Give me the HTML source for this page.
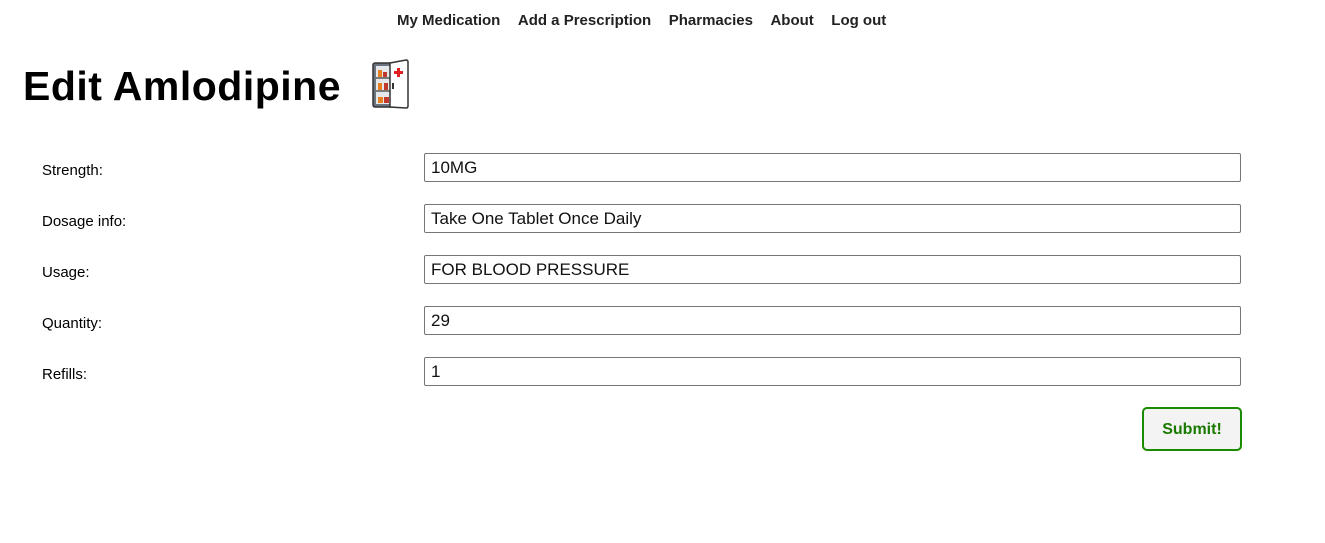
<!DOCTYPE html>
<html><head><style>
body{margin:0;background:#fff;font-family:"Liberation Sans","DejaVu Sans",sans-serif;width:1325px;height:543px;overflow:hidden;position:relative}
nav{position:absolute;top:12px;left:397px;font-size:15px;font-weight:bold;color:#222;white-space:nowrap}
nav span{margin-right:17.5px}
h1{position:absolute;left:23px;top:63px;margin:0;font-size:41px;font-weight:bold;letter-spacing:0.5px}
.lbl{position:absolute;left:42px;font-size:15px;color:#000}
.inp{position:absolute;left:424px;border:1px solid #767676;border-radius:2px;font-size:17px;line-height:27px;padding-left:6px;box-sizing:border-box;width:817px;height:29px;color:#111}
.btn{position:absolute;left:1142px;top:407px;width:100px;height:44px;box-sizing:border-box;border:2px solid #1a8a00;border-radius:5px;background:#f3f3f3;color:#1a7a00;font-weight:bold;font-size:16px;text-align:center;line-height:42px}
</style></head><body>
<nav><span>My Medication</span><span>Add a Prescription</span><span>Pharmacies</span><span>About</span><span>Log out</span></nav>
<h1>Edit Amlodipine</h1>
<svg style="position:absolute;left:370px;top:59px" width="42" height="52" viewBox="0 0 42 52">
<rect x="3" y="4" width="22" height="44" rx="2" fill="#6b7280" stroke="#333" stroke-width="1.5"/>
<rect x="6" y="7" width="16" height="38" fill="#e5e7eb"/>
<line x1="6" y1="19" x2="22" y2="19" stroke="#555" stroke-width="1.5"/>
<line x1="6" y1="32" x2="22" y2="32" stroke="#555" stroke-width="1.5"/>
<rect x="8" y="11" width="4" height="7" fill="#e67e22"/><rect x="13" y="13" width="4" height="5" fill="#c0392b"/>
<rect x="8" y="24" width="4" height="7" fill="#e67e22"/><rect x="14" y="24" width="4" height="7" fill="#c0392b"/>
<rect x="8" y="38" width="5" height="6" fill="#e67e22"/><rect x="14" y="38" width="5" height="6" fill="#c0392b"/>
<path d="M20 4 L36 1 Q38 1 38 3 L38 47 Q38 49 36 49 L20 48 Z" fill="#fff" stroke="#333" stroke-width="1.5"/>
<rect x="27" y="9" width="3" height="9" fill="#e02020"/><rect x="24" y="12" width="9" height="3" fill="#e02020"/>
<rect x="22" y="24" width="2" height="6" fill="#333"/>
</svg>
<div class="lbl" style="top:162px">Strength:</div>
<div class="lbl" style="top:213px">Dosage info:</div>
<div class="lbl" style="top:264px">Usage:</div>
<div class="lbl" style="top:315px">Quantity:</div>
<div class="lbl" style="top:366px">Refills:</div>
<div class="inp" style="top:153px">10MG</div>
<div class="inp" style="top:204px">Take One Tablet Once Daily</div>
<div class="inp" style="top:255px">FOR BLOOD PRESSURE</div>
<div class="inp" style="top:306px">29</div>
<div class="inp" style="top:357px">1</div>
<div class="btn">Submit!</div>
</body></html>
